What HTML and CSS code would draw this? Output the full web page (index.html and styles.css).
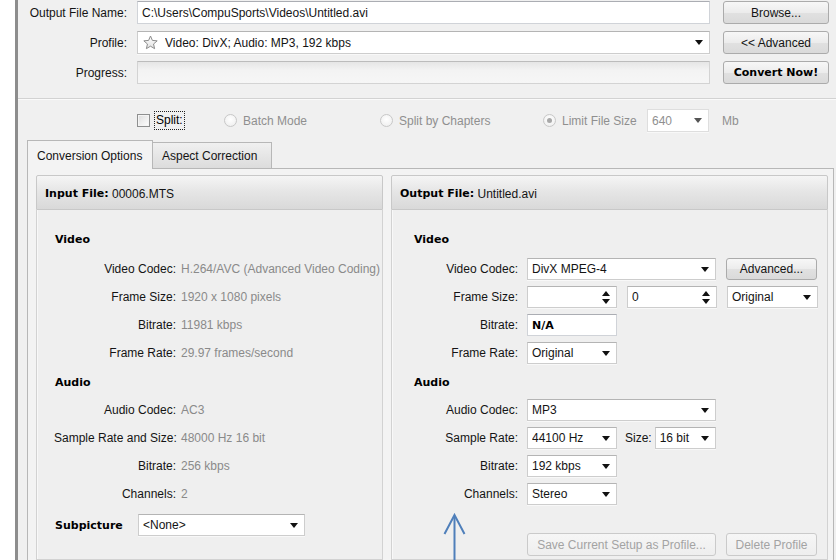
FILE: index.html
```html
<!DOCTYPE html>
<html>
<head>
<meta charset="utf-8">
<title>Converter</title>
<link rel="stylesheet" href="styles.css">
</head>
<body>
<div class="app">
  <div class="gutter"></div>
  <div class="window">
    <div class="top">
      <div class="row">
        <div class="row-label">Output File Name:</div>
        <div class="textbox wide">C:\Users\CompuSports\Videos\Untitled.avi</div>
        <button class="btn side">Browse...</button>
      </div>
      <div class="row">
        <div class="row-label">Profile:</div>
        <div class="combo wide profile">
          <svg class="star" width="16" height="15" viewBox="0 0 16 15">
            <defs>
              <linearGradient id="starFill" x1="0" y1="0" x2="0" y2="1">
                <stop offset="0" stop-color="#ffffff"/>
                <stop offset="1" stop-color="#e2e2e2"/>
              </linearGradient>
            </defs>
            <polygon points="7.5,1 9.38,5.41 14.16,5.84 10.54,8.99 11.61,13.66 7.5,11.2 3.39,13.66 4.46,8.99 0.84,5.84 5.62,5.41" fill="url(#starFill)" stroke="#8c8c8c" stroke-width="1" stroke-linejoin="round"/>
          </svg>
          <span class="combo-text">Video: DivX; Audio: MP3, 192 kbps</span>
          <svg class="arrow" width="8" height="5" viewBox="0 0 8 5"><polygon points="0,0 8,0 4,5" fill="#111"/></svg>
        </div>
        <button class="btn side">&lt;&lt; Advanced</button>
      </div>
      <div class="row">
        <div class="row-label">Progress:</div>
        <div class="progress wide"></div>
        <button class="btn side strong">Convert Now!</button>
      </div>
    </div>

    <div class="options">
      <div class="opt">
        <span class="check"></span>
        <span class="focus">Split:</span>
      </div>
      <div class="opt disabled">
        <span class="radio"></span>
        <span>Batch Mode</span>
      </div>
      <div class="opt disabled">
        <span class="radio"></span>
        <span>Split by Chapters</span>
      </div>
      <div class="opt disabled">
        <span class="radio on"></span>
        <span>Limit File Size</span>
      </div>
      <div class="opt">
        <div class="combo size-combo">
          <span class="combo-text">640</span>
          <svg class="arrow" width="8" height="5" viewBox="0 0 8 5"><polygon points="0,0 8,0 4,5" fill="#555"/></svg>
        </div>
      </div>
      <div class="opt disabled">Mb</div>
    </div>

    <div class="tabs">
      <div class="tab active">Conversion Options</div>
      <div class="tab">Aspect Correction</div>
    </div>

    <div class="pane">
      <section class="panel panel-in">
        <header class="panel-head"><b>Input File:</b> 00006.MTS</header>
        <div class="panel-body">
          <div class="heading">Video</div>
          <div class="info first">
            <div class="info-row"><span class="info-label">Video Codec:</span><span class="info-value">H.264/AVC (Advanced Video Coding)</span></div>
            <div class="info-row"><span class="info-label">Frame Size:</span><span class="info-value">1920 x 1080 pixels</span></div>
            <div class="info-row"><span class="info-label">Bitrate:</span><span class="info-value">11981 kbps</span></div>
            <div class="info-row"><span class="info-label">Frame Rate:</span><span class="info-value">29.97 frames/second</span></div>
          </div>
          <div class="heading second">Audio</div>
          <div class="info">
            <div class="info-row"><span class="info-label">Audio Codec:</span><span class="info-value">AC3</span></div>
            <div class="info-row"><span class="info-label">Sample Rate and Size:</span><span class="info-value">48000 Hz 16 bit</span></div>
            <div class="info-row"><span class="info-label">Bitrate:</span><span class="info-value">256 kbps</span></div>
            <div class="info-row"><span class="info-label">Channels:</span><span class="info-value">2</span></div>
          </div>
          <div class="subpicture">
            <span class="heading-inline">Subpicture</span>
            <div class="combo sub-combo">
              <span class="combo-text">&lt;None&gt;</span>
              <svg class="arrow" width="8" height="5" viewBox="0 0 8 5"><polygon points="0,0 8,0 4,5" fill="#111"/></svg>
            </div>
          </div>
        </div>
      </section>

      <section class="panel panel-out">
        <header class="panel-head"><b>Output File:</b> Untitled.avi</header>
        <div class="panel-body out">
          <div class="heading">Video</div>
          <div class="form first">
            <div class="form-row">
              <span class="form-label">Video Codec:</span>
              <div class="combo w189"><span class="combo-text">DivX MPEG-4</span><svg class="arrow" width="8" height="5" viewBox="0 0 8 5"><polygon points="0,0 8,0 4,5" fill="#111"/></svg></div>
              <button class="btn small">Advanced...</button>
            </div>
            <div class="form-row">
              <span class="form-label">Frame Size:</span>
              <div class="combo w90 spin"><span class="combo-text"></span><svg class="spinner" width="8" height="13" viewBox="0 0 8 13"><polygon points="0,5 8,5 4,0" fill="#111"/><polygon points="0,8 8,8 4,13" fill="#111"/></svg></div>
              <div class="combo w90 spin gap10"><span class="combo-text">0</span><svg class="spinner" width="8" height="13" viewBox="0 0 8 13"><polygon points="0,5 8,5 4,0" fill="#111"/><polygon points="0,8 8,8 4,13" fill="#111"/></svg></div>
              <div class="combo w91 gap10"><span class="combo-text">Original</span><svg class="arrow" width="8" height="5" viewBox="0 0 8 5"><polygon points="0,0 8,0 4,5" fill="#111"/></svg></div>
            </div>
            <div class="form-row">
              <span class="form-label">Bitrate:</span>
              <div class="textbox w90 bold-text">N/A</div>
            </div>
            <div class="form-row">
              <span class="form-label">Frame Rate:</span>
              <div class="combo w90"><span class="combo-text">Original</span><svg class="arrow" width="8" height="5" viewBox="0 0 8 5"><polygon points="0,0 8,0 4,5" fill="#111"/></svg></div>
            </div>
          </div>
          <div class="heading second">Audio</div>
          <div class="form">
            <div class="form-row">
              <span class="form-label">Audio Codec:</span>
              <div class="combo w189"><span class="combo-text">MP3</span><svg class="arrow" width="8" height="5" viewBox="0 0 8 5"><polygon points="0,0 8,0 4,5" fill="#111"/></svg></div>
            </div>
            <div class="form-row">
              <span class="form-label">Sample Rate:</span>
              <div class="combo w90"><span class="combo-text">44100 Hz</span><svg class="arrow" width="8" height="5" viewBox="0 0 8 5"><polygon points="0,0 8,0 4,5" fill="#111"/></svg></div>
              <span class="inline-label">Size:</span>
              <div class="combo w61"><span class="combo-text">16 bit</span><svg class="arrow" width="8" height="5" viewBox="0 0 8 5"><polygon points="0,0 8,0 4,5" fill="#111"/></svg></div>
            </div>
            <div class="form-row">
              <span class="form-label">Bitrate:</span>
              <div class="combo w90"><span class="combo-text">192 kbps</span><svg class="arrow" width="8" height="5" viewBox="0 0 8 5"><polygon points="0,0 8,0 4,5" fill="#111"/></svg></div>
            </div>
            <div class="form-row">
              <span class="form-label">Channels:</span>
              <div class="combo w90"><span class="combo-text">Stereo</span><svg class="arrow" width="8" height="5" viewBox="0 0 8 5"><polygon points="0,0 8,0 4,5" fill="#111"/></svg></div>
            </div>
          </div>
          <div class="profile-actions">
            <button class="btn off w189">Save Current Setup as Profile...</button>
            <button class="btn off w91">Delete Profile</button>
          </div>
        </div>
      </section>
    </div>
  </div>
</div>

<svg class="pointer" width="23" height="48" viewBox="0 0 23 48">
  <line x1="11.5" y1="3" x2="11.5" y2="48" stroke="#4f7fba" stroke-width="2"/>
  <polyline points="1.5,21 11.5,2 21.5,21" fill="none" stroke="#4f7fba" stroke-width="2"/>
</svg>
</body>
</html>
```

FILE: styles.css
```css
* { box-sizing: border-box; }

html, body {
  margin: 0;
  width: 836px;
  height: 560px;
  overflow: hidden;
}

body {
  position: relative;
  background: #ffffff;
  font: 12px "Liberation Sans", Arial, sans-serif;
  color: #141414;
}

.app {
  display: flex;
  height: 560px;
}

.gutter {
  width: 15px;
  background: #ffffff;
}

.window {
  flex: 1;
  min-width: 0;
  border-left: 3px solid #8d8d8d;
  background: #f0f0f0;
  display: flex;
  flex-direction: column;
}

/* ---------- top file / profile area ---------- */
.top {
  padding: 1px 0 14px 0;
  border-bottom: 1px solid #d2d2d2;
  box-shadow: 0 1px 0 #fafafa;
}

.row {
  display: flex;
  align-items: center;
  height: 23px;
}
.row + .row { margin-top: 7px; }

.row-label {
  width: 109px;
  text-align: right;
}

.wide {
  width: 573px;
  margin-left: 10px;
}

.textbox {
  height: 23px;
  display: flex;
  align-items: center;
  padding-left: 4px;
  background: #ffffff;
  border: 1px solid #d0d3d8;
  border-top-color: #abadb3;
  white-space: nowrap;
}

.progress {
  height: 23px;
  border: 1px solid #d3d3d3;
  border-top-color: #bcbcbc;
  background: linear-gradient(#e6e6e6, #f3f3f3 40%, #f6f6f6);
}

.combo {
  height: 22px;
  display: flex;
  align-items: center;
  padding-left: 4px;
  background: #ffffff;
  border: 1px solid #cdcdcd;
  border-top-color: #b4b4b4;
  box-shadow: 0 1px 0 #f8f8f8;
  white-space: nowrap;
}
.combo-text {
  flex: 1;
  min-width: 0;
  overflow: hidden;
}
.combo .arrow {
  flex: none;
  margin-right: 6px;
}
.combo .spinner {
  flex: none;
  margin-right: 6px;
}

.profile {
  height: 23px;
}
.profile .star {
  flex: none;
  margin: 0 6px 0 1px;
}

.btn {
  font: 12px "Liberation Sans", Arial, sans-serif;
  color: #141414;
  height: 23px;
  padding: 0;
  border: 1px solid #ababab;
  border-radius: 3px;
  background: linear-gradient(#f7f7f7, #ececec 50%, #e1e1e1 51%, #dadada);
}

.side {
  width: 106px;
  margin-left: 13px;
}

.strong {
  font: bold 11px "DejaVu Sans", Verdana, sans-serif;
  color: #000;
}

/* ---------- split options ---------- */
.options {
  display: grid;
  grid-template-columns: 87px 156px 163px 104px 75px auto;
  align-items: center;
  height: 23px;
  margin-top: 10px;
  padding-left: 119px;
}

.opt {
  display: flex;
  align-items: center;
  white-space: nowrap;
}
.opt.disabled { color: #8f8f8f; }

.check {
  width: 13px;
  height: 13px;
  border: 1px solid #8e8f8f;
  background: linear-gradient(135deg, #dcdcdc, #ffffff);
  box-shadow: inset 0 0 0 1px #f4f4f4;
  margin-right: 4px;
}

.focus {
  border: 1px dotted #222;
  padding: 1px 1px 2px 1px;
  color: #000;
}

.radio {
  width: 13px;
  height: 13px;
  border-radius: 50%;
  border: 1px solid #c8c8c8;
  background: radial-gradient(circle at 50% 40%, #ffffff, #ececec);
  margin-right: 6px;
  display: flex;
  align-items: center;
  justify-content: center;
}
.radio.on::before {
  content: "";
  width: 5px;
  height: 5px;
  border-radius: 50%;
  background: #a8a8a8;
}

.size-combo {
  width: 62px;
  height: 23px;
  color: #8f8f8f;
  border-color: #dedede;
}

/* ---------- tabs ---------- */
.tabs {
  display: flex;
  align-items: flex-end;
  height: 28px;
  margin: 8px 0 0 9px;
}

.tab {
  height: 26px;
  padding: 0 9px;
  display: flex;
  align-items: center;
  border: 1px solid #b7b7b7;
  border-bottom: none;
  background: linear-gradient(#f0f0f0, #dcdcdc);
  white-space: nowrap;
}
.tab.active {
  position: relative;
  z-index: 1;
  width: 126px;
  height: 29px;
  margin-bottom: -1px;
  background: #f3f3f3;
  padding-top: 1px;
}
.tab + .tab {
  margin-left: -1px;
  width: 120px;
}

.pane {
  flex: 1;
  display: flex;
  gap: 8px;
  margin: 0 2px 0 9px;
  padding: 6px 5px 0 8px;
  border: 1px solid #b7b7b7;
  border-bottom: none;
  background: #f3f3f3;
}

/* ---------- input / output panels ---------- */
.panel {
  display: flex;
  flex-direction: column;
}
.panel-in { width: 347px; }
.panel-out { flex: 1; }

.panel-head {
  height: 35px;
  display: flex;
  align-items: center;
  padding: 2px 0 0 8px;
  border: 1px solid #c8c8c8;
  border-radius: 2px 2px 0 0;
  background: linear-gradient(#f5f5f5, #e6e6e6 45%, #d9d9d9);
  white-space: pre;
}
.panel-head b {
  font: bold 11px "DejaVu Sans", Verdana, sans-serif;
  color: #000;
}

.panel-body {
  flex: 1;
  padding: 15px 0 0 17px;
  border: 1px solid #d2d2d2;
  border-top: none;
  background: #efefef;
  box-shadow: inset 1px 0 0 #f8f8f8;
}
.panel-body.out { padding-left: 22px; }

.heading {
  height: 28px;
  display: flex;
  align-items: center;
  padding-left: 1px;
  font: bold 11px "DejaVu Sans", Verdana, sans-serif;
  color: #000;
}
.panel-body.out .heading { padding-left: 0; }
.heading.second { margin-top: 1px; }

.info.first,
.form.first { margin-top: 2px; }

.info-row {
  display: grid;
  grid-template-columns: 122px auto;
  column-gap: 5px;
  align-items: center;
  height: 28px;
  white-space: nowrap;
}
.info-label { text-align: right; }
.info-value { color: #8a8a8a; }

.subpicture {
  display: flex;
  align-items: center;
  height: 28px;
  margin-top: 3px;
}
.heading-inline {
  width: 84px;
  padding-left: 1px;
  font: bold 11px "DejaVu Sans", Verdana, sans-serif;
  color: #000;
}
.sub-combo {
  width: 167px;
  height: 22px;
}

.form-row {
  display: flex;
  align-items: center;
  height: 28px;
  white-space: nowrap;
}
.form-label {
  width: 104px;
  margin-right: 9px;
  text-align: right;
}
.inline-label {
  margin: 0 3px 0 8px;
}

.w189 { width: 189px; }
.w90 { width: 90px; }
.w91 { width: 91px; }
.w61 { width: 61px; }
.gap10 { margin-left: 10px; }

.form-row .textbox { height: 22px; }
.bold-text {
  font: bold 11px "DejaVu Sans", Verdana, sans-serif;
  color: #000;
}

.btn.small {
  width: 91px;
  height: 22px;
  margin-left: 10px;
}

.profile-actions {
  display: flex;
  gap: 10px;
  margin: 25px 0 0 113px;
}
.btn.off {
  color: #a3a3a3;
  border-color: #cacaca;
  background: linear-gradient(#f6f6f6, #eeeeee);
}

/* annotation arrow drawn over the form */
.pointer {
  position: absolute;
  left: 443px;
  top: 513px;
}
```
